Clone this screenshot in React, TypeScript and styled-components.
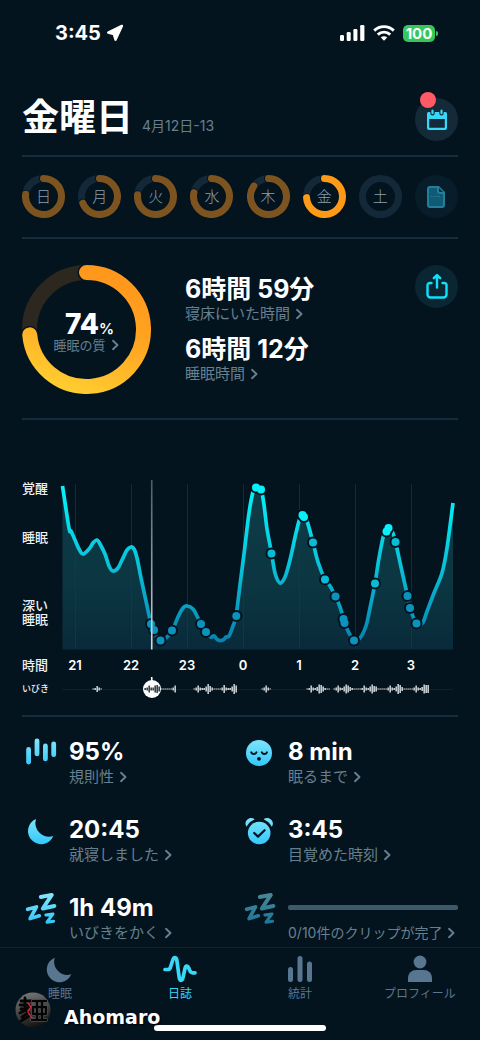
import React, { useState } from "react";
import styled, { createGlobalStyle } from "styled-components";

const color = {
  bg: "#04141f",
  white: "#ffffff",
  muted: "#66808f",
  line: "#162c3b",
  track: "#13293a",
  orange: "#ff9a17",
  orangeDim: "#7d541f",
  cyan: "#37d8f8",
  tab: "#587690",
};

const latin = `Inter, "Noto Sans CJK JP", sans-serif`;

const GlobalStyle = createGlobalStyle`
  * { box-sizing: border-box; }
  body {
    margin: 0;
    background: ${color.bg};
    color: ${color.white};
    font-family: ${latin};
    -webkit-font-smoothing: antialiased;
  }
  button { font: inherit; color: inherit; background: none; border: 0; padding: 0; margin: 0; cursor: pointer; text-align: left; }
  a { color: inherit; text-decoration: none; }
  h1, p { margin: 0; }
  svg { display: block; }
`;

const Page = styled.div`
  min-height: 100vh;
  display: flex;
  flex-direction: column;
`;

const StatusBar = styled.header`
  height: 66px;
  padding: 0 42px 0 55px;
  display: flex;
  align-items: center;
  justify-content: space-between;
`;

const StatusGroup = styled.div<{ $gap: number }>`
  display: flex;
  align-items: center;
  gap: ${(p) => p.$gap}px;
`;

const Clock = styled.span`
  font-size: 20px;
  line-height: 24px;
  font-weight: 700;
`;

const Battery = styled.span`
  position: relative;
  width: 32px;
  height: 17px;
  margin-right: 3px;
  border-radius: 5px;
  background: #34c759;
  font-size: 15px;
  line-height: 17px;
  font-weight: 700;
  text-align: center;
  &::after {
    content: "";
    position: absolute;
    left: 33px;
    top: 6px;
    width: 2px;
    height: 5px;
    border-radius: 0 2px 2px 0;
    background: #34c759;
  }
`;

const Section = styled.section<{ $top: number; $bottom: number; $last?: boolean }>`
  margin: 0 22px;
  padding: ${(p) => p.$top}px 0 ${(p) => p.$bottom}px;
  border-bottom: ${(p) => (p.$last ? "0" : `2px solid ${color.line}`)};
`;

const TitleRow = styled.div`
  display: flex;
  justify-content: space-between;
`;

const TitleGroup = styled.div`
  display: flex;
  align-items: baseline;
  gap: 9px;
`;

const Title = styled.h1`
  font-size: 37px;
  line-height: 40px;
  font-weight: 700;
`;

const DateText = styled.span`
  font-size: 14px;
  line-height: 20px;
  color: ${color.muted};
`;

const RoundButton = styled.button<{ $fill: string }>`
  position: relative;
  flex: none;
  width: 43px;
  height: 43px;
  border-radius: 50%;
  background: ${(p) => p.$fill};
  display: grid;
  place-items: center;
`;

const Badge = styled.span`
  position: absolute;
  left: 5px;
  top: -6px;
  width: 16px;
  height: 16px;
  border-radius: 50%;
  background: #ff5a66;
`;

const Week = styled.div`
  display: flex;
  justify-content: space-between;
`;

const DayButton = styled.button`
  display: grid;
  place-items: center;
  width: 43px;
  height: 43px;
  & > * { grid-area: 1 / 1; }
`;

const DayName = styled.span`
  font-size: 15px;
  line-height: 20px;
  font-weight: 300;
  color: #8aa0ae;
`;

const Score = styled.div`
  display: flex;
  align-items: flex-start;
`;

const ScoreRing = styled.button`
  flex: none;
  display: grid;
  place-items: center;
  width: 129px;
  height: 129px;
  & > * { grid-area: 1 / 1; }
`;

const ScoreText = styled.span`
  padding-top: 6px;
  display: flex;
  flex-direction: column;
  align-items: center;
`;

const ScoreValue = styled.span`
  display: flex;
  align-items: baseline;
  height: 24px;
  padding-left: 6px;
  font-size: 28px;
  line-height: 24px;
  font-weight: 800;
  small { font-size: 15px; font-weight: 600; }
`;

const Times = styled.div`
  flex: 1;
  padding-top: 11px;
  margin-left: 34px;
  display: flex;
  flex-direction: column;
  align-items: flex-start;
  gap: 10px;
`;

const Metric = styled.button`
  display: flex;
  flex-direction: column;
  align-items: flex-start;
`;

const Value = styled.span<{ $size: number }>`
  font-size: ${(p) => p.$size}px;
  line-height: 26px;
  font-weight: 700;
  white-space: nowrap;
`;

const Label = styled.span<{ $size: number; $line: number }>`
  display: flex;
  align-items: center;
  gap: 5px;
  font-size: ${(p) => p.$size}px;
  line-height: ${(p) => p.$line}px;
  color: ${color.muted};
  white-space: nowrap;
`;

const ChartGrid = styled.div`
  display: grid;
  grid-template-columns: 40px minmax(0, 1fr);
  padding-right: 5px;
`;

const DepthLabels = styled.div`
  padding: 1px 0 24px;
  display: flex;
  flex-direction: column;
  font-size: 13px;
  line-height: 14px;
  font-weight: 500;
  color: #eef1f3;
  p:nth-child(2) { margin-top: 35px; }
  p:nth-child(3) { margin-top: auto; }
`;

const AxisLabel = styled.span<{ $size: number }>`
  align-self: center;
  font-size: ${(p) => p.$size}px;
  line-height: 14px;
  font-weight: 500;
  color: #eef1f3;
`;

const Hours = styled.div`
  display: flex;
  justify-content: space-between;
  padding: 0 30px 0 1px;
  line-height: 30px;
  font-size: 13px;
  font-weight: 600;
  span { width: 24px; text-align: center; }
`;

const PlotSvg = styled.svg`
  width: 100%;
  height: auto;
  overflow: visible;
`;

const Scrubber = styled.div`
  position: relative;
  height: 18px;
`;

const ScrubInput = styled.input`
  appearance: none;
  display: block;
  width: 100%;
  height: 18px;
  margin: 0;
  background: linear-gradient(#0a2230, #0a2230) center / 100% 1px no-repeat;
  &::-webkit-slider-thumb {
    appearance: none;
    width: 18px;
    height: 18px;
    border-radius: 50%;
    background: ${color.white};
  }
`;

const WaveOverlay = styled.div`
  position: absolute;
  inset: 0;
  pointer-events: none;
`;

const Stats = styled.div`
  display: grid;
  grid-template-columns: 1fr 1fr;
  gap: 25px 5px;
  padding-left: 3px;
`;

const Stat = styled.button`
  display: flex;
  align-items: flex-start;
  gap: 12px;
`;

const StatBody = styled.span`
  flex: 1;
  padding-top: 3px;
  display: flex;
  flex-direction: column;
`;

const Progress = styled.span`
  height: 5px;
  margin: 10px 0 11px;
  border-radius: 2px;
  background: #3d5a6b;
`;

const TabBar = styled.nav`
  position: relative;
  flex: 1;
  min-height: 93px;
  border-top: 1px solid #10242f;
  display: grid;
  grid-template-columns: repeat(4, 1fr);
  align-items: start;
`;

const Tab = styled.a<{ $active?: boolean }>`
  padding-top: 6px;
  display: flex;
  flex-direction: column;
  align-items: center;
  gap: 1px;
  font-size: 12px;
  line-height: 18px;
  color: ${(p) => (p.$active ? color.cyan : color.tab)};
`;

const HomeIndicator = styled.span`
  position: absolute;
  left: 50%;
  bottom: 9px;
  width: 36%;
  height: 6px;
  margin-left: -18%;
  border-radius: 3px;
  background: ${color.white};
`;

const Signature = styled.div`
  position: absolute;
  left: 15px;
  bottom: 12px;
  display: flex;
  align-items: center;
  gap: 13px;
`;

const SignatureName = styled.span`
  padding-top: 15px;
  font-family: "DejaVu Sans", sans-serif;
  font-size: 19px;
  line-height: 22px;
  font-weight: 700;
  text-shadow: 1px 1px 2px #000;
`;

/* ---------- rings ---------- */

function arcPath(c: number, r: number, fraction: number) {
  const a = fraction * Math.PI * 2;
  const x = c + r * Math.sin(a);
  const y = c - r * Math.cos(a);
  return `M${c} ${c - r}A${r} ${r} 0 ${fraction > 0.5 ? 1 : 0} 1 ${x.toFixed(2)} ${y.toFixed(2)}`;
}

type RingProps = { size: number; width: number; value: number; track: string; stroke: string; gap: number };

function Ring({ size, width, value, track, stroke, gap }: RingProps) {
  const c = size / 2;
  const r = (size - width) / 2;
  const d = arcPath(c, r, value);
  return (
    <svg width={size} height={size} fill="none" strokeLinecap="round" aria-hidden="true">
      <defs>
        <linearGradient id="score" x1="0.65" y1="0" x2="0.3" y2="1">
          <stop offset="0" stopColor="#ff971c" />
          <stop offset="0.5" stopColor="#ffa722" />
          <stop offset="1" stopColor="#ffcc30" />
        </linearGradient>
      </defs>
      <circle cx={c} cy={c} r={r} stroke={track} strokeWidth={width} />
      {value > 0 && <path d={d} stroke={color.bg} strokeWidth={width + gap} />}
      {value > 0 && <path d={d} stroke={stroke} strokeWidth={width} />}
    </svg>
  );
}

/* ---------- chart ---------- */

const curve: number[][] = [
  [0.5, 6], [7, 48], [9, 51], [13, 60], [17, 69], [21, 74], [27, 69], [31, 63], [35, 60], [38, 64], [43, 74],
  [47, 86], [51, 91], [56, 88], [60, 80], [65, 70], [69, 67], [72, 69], [75, 78], [79, 98], [84, 121], [89, 144],
  [92, 150], [95, 157], [98.5, 160.5], [103, 159], [110, 151], [116, 137], [121, 128], [125, 126], [131, 129],
  [135, 136], [139, 144], [144, 152], [149, 157], [152, 156], [156, 160], [161, 160], [164, 157], [167, 156],
  [171, 146], [174, 136], [178, 105], [182, 74], [187, 33], [191, 12], [194, 7], [199, 9], [202, 25], [205, 49],
  [209.5, 73], [213, 93], [218, 103], [223, 97], [228, 80], [234, 53], [238, 38], [241, 34.5], [245, 41],
  [251, 62.5], [256, 82], [263, 99.5], [268, 106], [273.5, 116.5], [278, 127], [282, 140], [286, 151],
  [292, 160.5], [298, 158], [304, 146], [308, 128], [313, 103.5], [317, 78], [322, 54], [326.5, 48], [330, 51],
  [333.5, 62], [339, 87], [345.5, 116], [348, 128], [354.5, 143.5], [360.5, 143], [365, 131.5], [372, 113],
  [380, 93], [385, 68], [391, 23],
];

const events: number[][] = [
  [89, 144], [92, 150], [98.5, 160.5], [110, 150.5], [139, 144], [144, 152], [174.3, 136], [194, 7.5], [199, 9.5],
  [209.5, 73.5], [240.5, 35], [242, 37], [251, 62.5], [263, 99.5], [273.5, 116.5], [281.5, 139], [282.5, 143],
  [292, 160.5], [313, 103.5], [324.5, 51.5], [326.5, 48], [333.5, 62], [345.5, 116], [348, 128], [354.5, 143.5],
];

function smooth(pts: number[][]) {
  let d = `M${pts[0][0]} ${pts[0][1]}`;
  for (let i = 0; i < pts.length - 1; i++) {
    const p0 = pts[Math.max(i - 1, 0)];
    const p1 = pts[i];
    const p2 = pts[i + 1];
    const p3 = pts[Math.min(i + 2, pts.length - 1)];
    const c = [
      p1[0] + (p2[0] - p0[0]) / 6, p1[1] + (p2[1] - p0[1]) / 6,
      p2[0] - (p3[0] - p1[0]) / 6, p2[1] - (p3[1] - p1[1]) / 6,
      p2[0], p2[1],
    ].map((n) => n.toFixed(1));
    d += `C${c.join(" ")}`;
  }
  return d;
}

const curvePath = smooth(curve);

function SleepPlot({ cursor }: { cursor: number }) {
  return (
    <PlotSvg viewBox="0 0 391 170" role="img" aria-label="睡眠">
      <defs>
        <linearGradient id="line" gradientUnits="userSpaceOnUse" x1="0" y1="5" x2="0" y2="165">
          <stop offset="0" stopColor="#04f5fb" />
          <stop offset="0.5" stopColor="#08c3d9" />
          <stop offset="1" stopColor="#087fae" />
        </linearGradient>
        <linearGradient id="area" gradientUnits="userSpaceOnUse" x1="0" y1="5" x2="0" y2="170">
          <stop offset="0" stopColor="#0d3c47" />
          <stop offset="0.6" stopColor="#0b3642" />
          <stop offset="1" stopColor="#092a3a" />
        </linearGradient>
        <linearGradient id="cursor" x1="0" y1="0" x2="0" y2="1">
          <stop offset="0" stopColor="#4d5a66" />
          <stop offset="0.5" stopColor="#9199a2" />
          <stop offset="1" stopColor="#d8dadd" />
        </linearGradient>
      </defs>
      <path d={`${curvePath}V169.500H0.500Z`} fill="url(#area)" />
      {[13, 69, 125, 181, 237, 293, 349].map((x) => (
        <rect key={x} x={x} y="4" width="1" height="165" fill="#123f4d" fillOpacity="0.6" />
      ))}
      <path d={curvePath} fill="none" stroke="url(#line)" strokeWidth="3.700" strokeLinejoin="round" />
      {events.map(([x, y]) => (
        <circle key={x} cx={x} cy={y} r="6" fill={color.bg} />
      ))}
      {events.map(([x, y]) => (
        <circle key={x} cx={x} cy={y} r="4" fill={y < 60 ? "#08f0f8" : y < 110 ? "#08bcd6" : "#0a93bd"} />
      ))}
      <rect x={cursor - 1} y="0" width="1.6" height="169.500" fill="url(#cursor)" />
    </PlotSvg>
  );
}

/* Runs of the snore track: start x, then the height of each bar, two units apart. */
const snoreRuns: [number, number[]][] = [
  [31, [1, 2, 6, 3, 1]],
  [83, [2, 3, 7, 3, 3, 7, 8, 5, 1, 1, 1, 1, 1, 1, 3, 7]],
  [132, [1, 3, 7, 3, 2, 2, 5, 10, 6, 3, 1, 1, 1, 1, 3, 8, 3, 2, 2, 5, 10, 7]],
  [200, [1, 3, 7, 3, 1]],
  [245, [1, 2, 7, 3, 2, 4, 9, 8, 5, 2, 1, 1]],
  [272, [1, 3, 7, 3, 2, 5, 9, 7, 4, 2, 1, 1, 1, 1, 2, 7, 3, 2, 5, 9, 6, 5, 1, 1, 1, 1, 1, 3, 7, 3, 2, 5, 10, 8, 4, 1, 1, 1, 1, 1, 3, 7, 3, 2, 4, 9, 8, 8]],
];

function SnoreWave({ cursor }: { cursor: number }) {
  return (
    <PlotSvg viewBox="0 0 391 18" aria-hidden="true">
      <rect x={cursor - 1} y="-3" width="1.6" height="5" fill={color.white} />
      {snoreRuns.flatMap(([start, bars]) =>
        bars.map((h, i) => {
          const x = start + i * 2;
          const inside = Math.abs(x - cursor) < 8;
          return (
            <rect key={x} x={x - 0.5} y={9 - h / 2} width="1.3" height={h} fill={inside ? "#07151f" : "#f2f5f6"} />
          );
        }),
      )}
    </PlotSvg>
  );
}

/* ---------- icons ---------- */

const Chevron = ({ size = 12 }: { size?: number }) => (
  <svg width={size * 0.75} height={size} viewBox="0 0 9 12" fill="none" stroke="currentColor" strokeWidth="1.900" strokeLinecap="round" strokeLinejoin="round" aria-hidden="true">
    <path d="M2 1.800 6.500 6 2 10.200" />
  </svg>
);

const LocationIcon = () => (
  <svg width="18" height="18" viewBox="0 0 18 18" fill="#fff" stroke="#fff" strokeWidth="2.400" strokeLinejoin="round" aria-hidden="true">
    <path d="M15.900 1.900 2.200 8.500 7.800 10.100 9.500 15.700z" />
  </svg>
);

const SignalIcon = () => (
  <svg width="25" height="16" viewBox="0 0 25 16" fill="#fff" aria-hidden="true">
    <rect x="0" y="10" width="4" height="6" rx="1.200" />
    <rect x="6.700" y="7" width="4" height="9" rx="1.200" />
    <rect x="13.400" y="4" width="4" height="12" rx="1.200" />
    <rect x="20.200" y="0" width="4.200" height="16" rx="1.200" />
  </svg>
);

const WifiIcon = () => (
  <svg width="22" height="16" viewBox="0 0 22 16" fill="none" stroke="#fff" strokeWidth="2.900" aria-hidden="true">
    <path d="M1.200 5.600a14 14 0 0 1 19.600 0" />
    <path d="M4.800 9.600a9 9 0 0 1 12.400 0" />
    <path d="M11 15.800 7.800 12.600a4.600 4.600 0 0 1 6.400 0z" fill="#fff" stroke="none" />
  </svg>
);

const CalendarIcon = () => (
  <svg width="22" height="22" viewBox="0 0 22 22" fill="none" aria-hidden="true">
    <path d="M2.500 3H4.300V4.200a2.200 2.200 0 0 0 4.400 0V3h4.600V4.200a2.200 2.200 0 0 0 4.400 0V3h1.800a1.500 1.500 0 0 1 1.500 1.500V19a2 2 0 0 1-2 2H3a2 2 0 0 1-2-2V4.500A1.500 1.500 0 0 1 2.500 3ZM3.200 10v8.800h15.600V10Z" fill={color.cyan} fillRule="evenodd" />
    <path d="M6.500 1.700v2.500M15.500 1.700v2.500" stroke={color.cyan} strokeWidth="2.200" strokeLinecap="round" />
  </svg>
);

const NoteIcon = () => (
  <svg width="20" height="24" viewBox="0 0 20 24" fill="none" stroke="#217f9b" strokeWidth="2" strokeLinejoin="round" aria-hidden="true">
    <path d="M4 2h8.500L18 7.500V20a2 2 0 0 1-2 2H4a2 2 0 0 1-2-2V4a2 2 0 0 1 2-2Z" fill="#125a73" />
    <path d="M12 2v4a2 2 0 0 0 2 2h4" fill="#0a2a3a" />
    <path d="M5 11.500h10" strokeWidth="1" strokeDasharray="1.500 1" />
  </svg>
);

const ShareIcon = () => (
  <svg width="24" height="28" viewBox="0 0 24 28" fill="none" stroke="#12e0fb" strokeWidth="2.400" strokeLinecap="round" strokeLinejoin="round" aria-hidden="true">
    <path d="M12 14.500V3M8.800 5.200 12 2l3.200 3.200" />
    <path d="M6.500 10H4.800A2.300 2.300 0 0 0 2.500 12.300V21.500a3 3 0 0 0 3 3h13a3 3 0 0 0 3-3v-9.200A2.300 2.300 0 0 0 19.200 10H17.500" />
  </svg>
);

const StatSvg = styled.svg`
  flex: none;
  overflow: visible;
`;

const StatIcon = ({ children, dim }: { children: React.ReactNode; dim?: boolean }) => (
  <StatSvg width="32" height="32" viewBox="0 0 32 32" opacity={dim ? 0.55 : 1} aria-hidden="true">
    <defs>
      <linearGradient id="ice" gradientUnits="userSpaceOnUse" x1="0" y1="2" x2="0" y2="30">
        <stop offset="0" stopColor="#85e6fa" />
        <stop offset="1" stopColor="#33c8fb" />
      </linearGradient>
    </defs>
    {children}
  </StatSvg>
);

const ice = "url(#ice)";

const RegularityIcon = () => (
  <StatIcon>
    <g fill={ice}>
      <rect x="1.200" y="11" width="4.800" height="17.500" rx="2.400" />
      <rect x="9.600" y="2.500" width="4.800" height="17.800" rx="2.400" />
      <rect x="18" y="7.500" width="4.800" height="17.800" rx="2.400" />
      <rect x="26.300" y="5.600" width="4.800" height="15.500" rx="2.400" />
    </g>
  </StatIcon>
);

const FaceIcon = () => (
  <StatIcon>
    <circle cx="15" cy="17" r="13" fill={ice} />
    <g fill="none" stroke={color.bg} strokeWidth="1.900" strokeLinecap="round">
      <path d="M7.200 16.300c1 2.300 4.200 2.300 5.200 0M17.800 16.300c1 2.300 4.200 2.300 5.200 0" />
    </g>
    <circle cx="15" cy="22.800" r="1.900" fill={color.bg} />
  </StatIcon>
);

const MoonIcon = () => (
  <StatIcon>
    <path d="M11 4.900A13.150 13.150 0 1 0 28.300 22 13.800 13.800 0 0 1 11 4.900Z" fill={ice} />
  </StatIcon>
);

const AlarmIcon = () => (
  <StatIcon>
    <path d="M2.600 12.800C-1.200 7.500 5.500 1.300 10.800 5.200 7.200 6.800 4.100 9.400 2.600 12.800ZM27.800 12.800c3.800-5.300-2.900-11.500-8.200-7.600 3.600 1.600 6.700 4.200 8.200 7.600Z" fill={ice} />
    <circle cx="15.200" cy="19" r="11.300" fill={ice} />
    <path d="m10.200 19 3.800 3.600 6.600-6.400" fill="none" stroke={color.bg} strokeWidth="2.200" strokeLinecap="round" strokeLinejoin="round" />
  </StatIcon>
);

const SnoreIcon = ({ dim }: { dim?: boolean }) => (
  <StatIcon dim={dim}>
    <g fill="none" stroke={ice} strokeLinecap="round" strokeLinejoin="round">
      <path d="M15.800 5 26.800 2.900 17.800 16.500 29.400 14" strokeWidth="3.900" />
      <path d="M2.600 17.300 11.500 14.900 5.100 26.600 14.300 23.800" strokeWidth="3.600" />
      <path d="M20.800 22.900 28 21.900 22 30.200 28.600 29.200" strokeWidth="3" />
    </g>
  </StatIcon>
);

const TabIcon = ({ children }: { children: React.ReactNode }) => (
  <svg width="34" height="30" viewBox="0 0 34 30" fill="currentColor" aria-hidden="true">{children}</svg>
);

const AvatarIcon = () => (
  <svg width="36" height="36" viewBox="0 0 36 36" role="img" aria-label="Ahomaro">
    <defs>
      <linearGradient id="disc" x1="0.3" y1="0" x2="0.600" y2="1">
        <stop offset="0" stopColor="#777" />
        <stop offset="0.5" stopColor="#454545" />
        <stop offset="1" stopColor="#101010" />
      </linearGradient>
    </defs>
    <circle cx="18" cy="18" r="17.500" fill="url(#disc)" />
    <g fill="none" strokeLinecap="round" strokeLinejoin="round">
      <path d="M6 9h10M10 6v10M5 13h10M6 17l9-1M5 21l6-3 3 3M7 25l7-5M6 29l8-5" stroke="#050505" strokeWidth="2.800" />
      <path d="M13 11l3 4-3 4M13 20l3 5 5 3" stroke="#d8283c" strokeWidth="1.400" />
      <path d="M18 9h13M17 28h14M22 9v19M27 9v19M18 15h13v7H18z" stroke="#6c6c6c" strokeWidth="3.600" />
      <path d="M18 9h13M17 28h14M22 9v19M27 9v19M18 15h13v7H18z" stroke="#050505" strokeWidth="2.600" />
    </g>
  </svg>
);

/* ---------- page ---------- */

const days = [
  { name: "日", value: 0.77 },
  { name: "月", value: 0.69 },
  { name: "火", value: 0.765 },
  { name: "水", value: 0.785 },
  { name: "木", value: 0.85 },
  { name: "金", value: 0.74, active: true },
  { name: "土", value: 0 },
];

const stats = [
  { icon: <RegularityIcon />, value: "95%", label: "規則性" },
  { icon: <FaceIcon />, value: "8 min", label: "眠るまで" },
  { icon: <MoonIcon />, value: "20:45", label: "就寝しました" },
  { icon: <AlarmIcon />, value: "3:45", label: "目覚めた時刻" },
  { icon: <SnoreIcon />, value: "1h 49m", label: "いびきをかく" },
];

export default function App() {
  const [position, setPosition] = useState(217);
  const cursor = 9 + (position / 1000) * 373;

  return (
    <>
      <GlobalStyle />
      <Page>
        <StatusBar>
          <StatusGroup $gap={5}>
            <Clock>3:45</Clock>
            <LocationIcon />
          </StatusGroup>
          <StatusGroup $gap={8}>
            <SignalIcon />
            <WifiIcon />
            <Battery>100</Battery>
          </StatusGroup>
        </StatusBar>

        <Section $top={32} $bottom={14}>
          <TitleRow>
            <TitleGroup>
              <Title>金曜日</Title>
              <DateText>4月12日-13</DateText>
            </TitleGroup>
            <RoundButton $fill="#142a39" aria-label="カレンダー">
              <CalendarIcon />
              <Badge />
            </RoundButton>
          </TitleRow>
        </Section>

        <Section $top={18} $bottom={19}>
          <Week>
            {days.map((d) => (
              <DayButton key={d.name} aria-pressed={!!d.active}>
                <Ring size={43} width={7} gap={2} value={d.value} track={color.track} stroke={d.active ? color.orange : color.orangeDim} />
                <DayName>{d.name}</DayName>
              </DayButton>
            ))}
            <RoundButton $fill="#071e2a" aria-label="メモ">
              <NoteIcon />
            </RoundButton>
          </Week>
        </Section>

        <Section $top={26} $bottom={24}>
          <Score>
            <ScoreRing>
              <Ring size={129} width={15} gap={3} value={0.735} track="#2c2820" stroke="url(#score)" />
              <ScoreText>
                <ScoreValue>74<small>%</small></ScoreValue>
                <Label $size={13} $line={18}>睡眠の質<Chevron size={12} /></Label>
              </ScoreText>
            </ScoreRing>
            <Times>
              <Metric>
                <Value $size={25}>6時間 59分</Value>
                <Label $size={15} $line={24}>寝床にいた時間<Chevron /></Label>
              </Metric>
              <Metric>
                <Value $size={25}>6時間 12分</Value>
                <Label $size={15} $line={24}>睡眠時間<Chevron /></Label>
              </Metric>
            </Times>
            <RoundButton $fill="#0a2633" aria-label="共有">
              <ShareIcon />
            </RoundButton>
          </Score>
        </Section>

        <Section $top={60} $bottom={17}>
          <ChartGrid>
            <DepthLabels>
              <p>覚醒</p>
              <p>睡眠</p>
              <p>深い<br />睡眠</p>
            </DepthLabels>
            <SleepPlot cursor={cursor} />
            <AxisLabel $size={13}>時間</AxisLabel>
            <Hours>
              {["21", "22", "23", "0", "1", "2", "3"].map((h) => <span key={h}>{h}</span>)}
            </Hours>
            <AxisLabel as="label" htmlFor="snore" $size={9}>いびき</AxisLabel>
            <Scrubber>
              <ScrubInput id="snore" type="range" min={0} max={1000} value={position} onChange={(e) => setPosition(Number(e.target.value))} />
              <WaveOverlay><SnoreWave cursor={cursor} /></WaveOverlay>
            </Scrubber>
          </ChartGrid>
        </Section>

        <Section $top={19} $bottom={2} $last>
          <Stats>
            {stats.map((s) => (
              <Stat key={s.label}>
                {s.icon}
                <StatBody>
                  <Value $size={24}>{s.value}</Value>
                  <Label $size={15} $line={24}>{s.label}<Chevron /></Label>
                </StatBody>
              </Stat>
            ))}
            <Stat>
              <SnoreIcon dim />
              <StatBody>
                <Progress role="progressbar" aria-valuemin={0} aria-valuemax={10} aria-valuenow={0} aria-label="クリップ" />
                <Label $size={14} $line={24}>0/10件のクリップが完了<Chevron /></Label>
              </StatBody>
            </Stat>
          </Stats>
        </Section>

        <TabBar>
          <Tab href="#sleep">
            <TabIcon><path d="M11.800 3.700A12.700 12.700 0 1 0 28.300 20.200 13.200 13.200 0 0 1 11.800 3.700Z" /></TabIcon>
            睡眠
          </Tab>
          <Tab href="#journal" $active aria-current="page">
            <TabIcon>
              <path d="M2 15.500H5c1.500 0 2.200-1 2.700-3L9.800 6c.9-3.300 3.300-3.300 4 0L16.200 23.500c.6 3.800 3.100 3.800 3.800 0L22 14.500c.7-3.200 2.700-3.200 3.700-.6l.9 2.300c.7 1.900 1.500 2.600 3 2.600H32" fill="none" stroke="currentColor" strokeWidth="3.700" strokeLinecap="round" strokeLinejoin="round" />
            </TabIcon>
            日誌
          </Tab>
          <Tab href="#stats">
            <TabIcon>
              <rect x="5" y="13" width="5" height="15" rx="2.500" />
              <rect x="14.500" y="2" width="5" height="26" rx="2.500" />
              <rect x="24" y="7.500" width="5" height="20.500" rx="2.500" />
            </TabIcon>
            統計
          </Tab>
          <Tab href="#profile">
            <TabIcon>
              <circle cx="17" cy="8" r="6.400" />
              <path d="M5 28v-4a8 8 0 0 1 8-8h8a8 8 0 0 1 8 8V28Z" />
            </TabIcon>
            プロフィール
          </Tab>
          <HomeIndicator />
          <Signature>
            <AvatarIcon />
            <SignatureName>Ahomaro</SignatureName>
          </Signature>
        </TabBar>
      </Page>
    </>
  );
}
